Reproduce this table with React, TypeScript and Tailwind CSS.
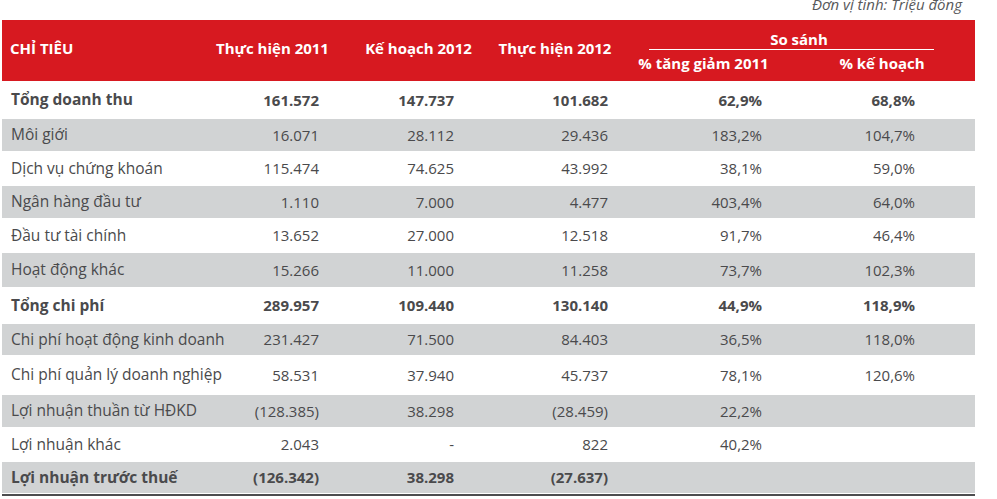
import React from "react";

type Row = {
  label: string;
  v: string[];
  bold?: boolean;
  gray?: boolean;
  h: number;
};

const rows: Row[] = [
  { label: "Tổng doanh thu", v: ["161.572", "147.737", "101.682", "62,9%", "68,8%"], bold: true, h: 38 },
  { label: "Môi giới", v: ["16.071", "28.112", "29.436", "183,2%", "104,7%"], gray: true, h: 32 },
  { label: "Dịch vụ chứng khoán", v: ["115.474", "74.625", "43.992", "38,1%", "59,0%"], h: 35 },
  { label: "Ngân hàng đầu tư", v: ["1.110", "7.000", "4.477", "403,4%", "64,0%"], gray: true, h: 32 },
  { label: "Đầu tư tài chính", v: ["13.652", "27.000", "12.518", "91,7%", "46,4%"], h: 35 },
  { label: "Hoạt động khác", v: ["15.266", "11.000", "11.258", "73,7%", "102,3%"], gray: true, h: 34 },
  { label: "Tổng chi phí", v: ["289.957", "109.440", "130.140", "44,9%", "118,9%"], bold: true, h: 37 },
  { label: "Chi phí hoạt động kinh doanh", v: ["231.427", "71.500", "84.403", "36,5%", "118,0%"], gray: true, h: 31 },
  { label: "Chi phí quản lý doanh nghiệp", v: ["58.531", "37.940", "45.737", "78,1%", "120,6%"], h: 40 },
  { label: "Lợi nhuận thuần từ HĐKD", v: ["(128.385)", "38.298", "(28.459)", "22,2%", ""], gray: true, h: 32 },
  { label: "Lợi nhuận khác", v: ["2.043", "-", "822", "40,2%", ""], h: 35 },
  { label: "Lợi nhuận trước thuế", v: ["(126.342)", "38.298", "(27.637)", "", ""], bold: true, gray: true, h: 31 },
];

export default function App() {
  return (
    <div
      className="w-[997px] h-[499px] bg-white overflow-hidden text-[#4a4a4c]"
      style={{ fontFamily: '"Open Sans", "Noto Sans", sans-serif' }}
    >
      <div className="h-[20px] flex justify-end pr-[35px]">
        <span className="block italic text-[15px] leading-[15px] -mt-[3px] text-[#58595b]">
          Đơn vị tính: Triệu đồng
        </span>
      </div>
      <div className="ml-[2px] w-[973px]">
        <div className="h-[61px] bg-[#d71920] text-white font-bold text-[15px] flex">
          <div className="w-[198px] pl-[8px] flex items-center pb-[5px]">CHỈ TIÊU</div>
          <div className="w-[145px] flex items-center justify-center pb-[5px] whitespace-nowrap">Thực hiện 2011</div>
          <div className="w-[147px] flex items-center justify-center pb-[5px] whitespace-nowrap">Kế hoạch 2012</div>
          <div className="w-[126px] flex items-center justify-center pb-[5px] whitespace-nowrap">Thực hiện 2012</div>
          <div className="flex-1 flex flex-col">
            <div className="h-[28px] ml-[31px] w-[285px] flex items-end justify-center pl-[15px] pb-[1px] leading-none">
              So sánh
            </div>
            <div className="mt-[1px] ml-[31px] w-[285px] h-px bg-white" />
            <div className="flex h-[31px] items-center pb-[4px]">
              <div className="w-[171px] text-center whitespace-nowrap">% tăng giảm 2011</div>
              <div className="w-[186px] text-center whitespace-nowrap">% kế hoạch</div>
            </div>
          </div>
        </div>
        {rows.map((r, i) => (
          <div
            key={i}
            className={`grid grid-cols-[240px_77px_135px_154px_154px_153px_60px] items-center text-[15px] ${
              r.gray ? "bg-[#d1d3d4]" : "bg-white"
            } ${r.bold ? "font-bold" : ""}`}
            style={{ height: r.h }}
          >
            <div className="pl-[9px] whitespace-nowrap text-[15.5px]">{r.label}</div>
            {r.v.map((x, j) => (
              <div key={j} className="text-right whitespace-nowrap">
                {x}
              </div>
            ))}
            <div />
          </div>
        ))}
        <div className="mt-[1px] h-[2px] bg-[#4d4d4f]" />
      </div>
    </div>
  );
}
